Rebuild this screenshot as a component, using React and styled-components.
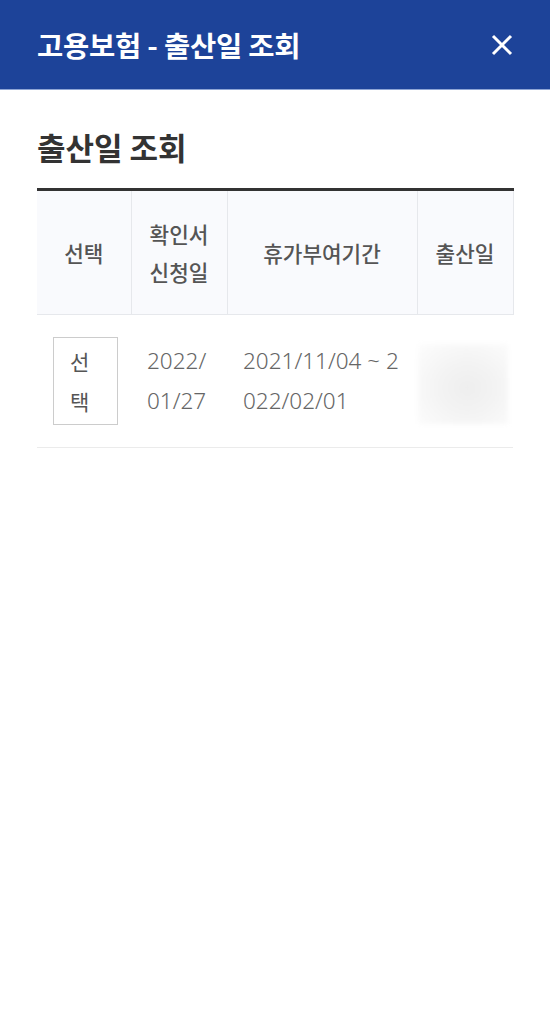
import React from "react";
import styled, { createGlobalStyle } from "styled-components";

const GlobalStyle = createGlobalStyle`
  html, body { margin: 0; padding: 0; background: #fff; }
  body { font-family: "Noto Sans CJK KR", "Noto Sans", sans-serif; }
  * { box-sizing: border-box; }
`;

const Page = styled.div`
  width: 550px;
  min-height: 1010px;
  background: #fff;
`;

const TopBar = styled.header`
  height: 90px;
  background: #1d4399;
  border-bottom: 1px solid #8ea5d5;
  display: flex;
  align-items: center;
  justify-content: space-between;
  padding: 0 36px 0 37px;
`;

const TopTitle = styled.h1`
  margin: 0;
  color: #fff;
  font-size: 28.5px;
  font-weight: 700;
  letter-spacing: -0.2px;
`;

const CloseButton = styled.button`
  width: 24px;
  height: 24px;
  padding: 0;
  border: 0;
  background: none;
  display: flex;
  align-items: center;
  justify-content: center;
  cursor: pointer;
`;

const Content = styled.main`
  padding: 36px 37px 0 37px;
`;

const SectionTitle = styled.h2`
  margin: 0 0 20px 0;
  font-size: 31px;
  line-height: 42px;
  font-weight: 700;
  color: #333;
`;

const Table = styled.table`
  width: 476px;
  border-collapse: collapse;
  table-layout: fixed;
  border-top: 3px solid #333;
`;

const HeadCell = styled.th`
  height: 125px;
  background: #f9fafd;
  border-right: 1px solid #e6e8ec;
  border-bottom: 1px solid #e6e8ec;
  font-size: 21.3px;
  line-height: 38px;
  font-weight: 500;
  color: #555;
  text-align: center;
  vertical-align: middle;
  padding: 0 16px;
  word-break: keep-all;
`;

const BodyRow = styled.tr`
  border-bottom: 1px solid #ebebeb;
`;

const BodyCell = styled.td`
  padding: 22px ${(p) => (p.$flush ? "0 22px 1px" : "16px")};
  font-family: "Noto Sans", "Noto Sans CJK KR", sans-serif;
  font-size: 22.5px;
  line-height: 40px;
  font-weight: 300;
  color: #666;
  text-align: ${(p) => p.$align || "left"};
  vertical-align: middle;
  word-break: break-all;
`;

const SelectButton = styled.button`
  width: 65px;
  height: 88px;
  padding: 0 14px 0 16px;
  border: 1px solid #ccc;
  background: #fff;
  font-family: "Noto Sans CJK KR", sans-serif;
  font-size: 21px;
  font-weight: 400;
  line-height: 40px;
  color: #555;
  text-align: left;
  word-break: break-all;
  cursor: pointer;
`;

const BlurredValue = styled.div`
  width: 90px;
  height: 80px;
  margin-top: 6px;
  background: radial-gradient(ellipse at 55% 55%, #eeeeee 0%, #f3f3f3 40%, #f9f9f9 75%, #fdfdfd 100%);
  filter: blur(2px);
`;

const cols = [94, 96, 190, 96];

export default function App() {
  return (
    <Page>
      <GlobalStyle />
      <TopBar>
        <TopTitle>고용보험 - 출산일 조회</TopTitle>
        <CloseButton aria-label="닫기">
          <svg width="22" height="22" viewBox="0 0 22 22">
            <path d="M2 2 L20 20 M20 2 L2 20" stroke="#fff" strokeWidth="3" strokeLinecap="butt" />
          </svg>
        </CloseButton>
      </TopBar>
      <Content>
        <SectionTitle>출산일 조회</SectionTitle>
        <Table>
          <colgroup>
            {cols.map((w, i) => (
              <col key={i} style={{ width: w }} />
            ))}
          </colgroup>
          <thead>
            <tr>
              <HeadCell>선택</HeadCell>
              <HeadCell>확인서 신청일</HeadCell>
              <HeadCell>휴가부여기간</HeadCell>
              <HeadCell>출산일</HeadCell>
            </tr>
          </thead>
          <tbody>
            <BodyRow>
              <BodyCell $align="center">
                <SelectButton>선택</SelectButton>
              </BodyCell>
              <BodyCell>2022/01/27</BodyCell>
              <BodyCell>2021/11/04 ~ 2022/02/01</BodyCell>
              <BodyCell $flush>
                <BlurredValue />
              </BodyCell>
            </BodyRow>
          </tbody>
        </Table>
      </Content>
    </Page>
  );
}
